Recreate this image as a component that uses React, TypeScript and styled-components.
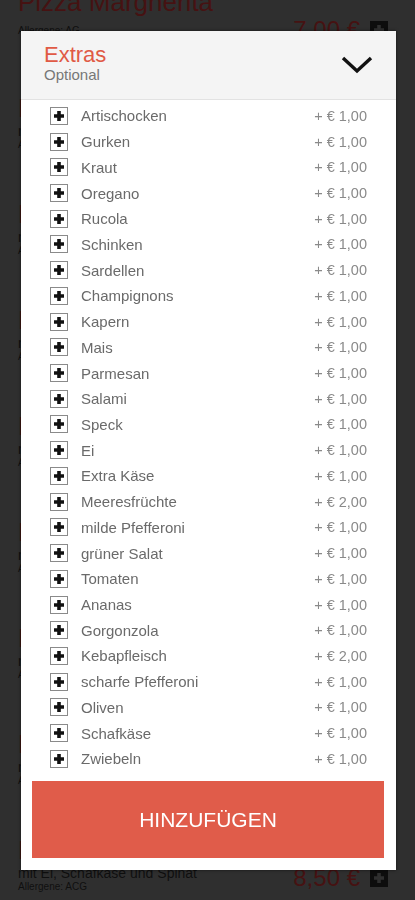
import styled, { createGlobalStyle } from 'styled-components';

interface Extra {
    name: string;
    price: string;
}

interface Dish {
    title: string;
    description?: string;
    allergens: string;
    price: string;
}

const extras: Extra[] = [
    { name: 'Artischocken', price: '1,00' },
    { name: 'Gurken', price: '1,00' },
    { name: 'Kraut', price: '1,00' },
    { name: 'Oregano', price: '1,00' },
    { name: 'Rucola', price: '1,00' },
    { name: 'Schinken', price: '1,00' },
    { name: 'Sardellen', price: '1,00' },
    { name: 'Champignons', price: '1,00' },
    { name: 'Kapern', price: '1,00' },
    { name: 'Mais', price: '1,00' },
    { name: 'Parmesan', price: '1,00' },
    { name: 'Salami', price: '1,00' },
    { name: 'Speck', price: '1,00' },
    { name: 'Ei', price: '1,00' },
    { name: 'Extra Käse', price: '1,00' },
    { name: 'Meeresfrüchte', price: '2,00' },
    { name: 'milde Pfefferoni', price: '1,00' },
    { name: 'grüner Salat', price: '1,00' },
    { name: 'Tomaten', price: '1,00' },
    { name: 'Ananas', price: '1,00' },
    { name: 'Gorgonzola', price: '1,00' },
    { name: 'Kebapfleisch', price: '2,00' },
    { name: 'scharfe Pfefferoni', price: '1,00' },
    { name: 'Oliven', price: '1,00' },
    { name: 'Schafkäse', price: '1,00' },
    { name: 'Zwiebeln', price: '1,00' },
];

const dishes: Dish[] = [
    { title: 'Pizza Margherita', allergens: 'AG', price: '7,00' },
    { title: 'Pizza Salami', description: 'mit Salami', allergens: 'AG', price: '7,50' },
    { title: 'Pizza Prosciutto', description: 'mit Schinken', allergens: 'AG', price: '7,50' },
    { title: 'Pizza Funghi', description: 'mit Champignons', allergens: 'AG', price: '7,50' },
    { title: 'Pizza Tonno', description: 'mit Thunfisch und Zwiebeln', allergens: 'ADG', price: '8,00' },
    { title: 'Pizza Hawaii', description: 'mit Schinken und Ananas', allergens: 'AG', price: '8,00' },
    { title: 'Pizza Vegetaria', description: 'mit Gemüse', allergens: 'AG', price: '8,00' },
    { title: 'Pizza Diavolo', description: 'mit scharfer Salami', allergens: 'AG', price: '8,00' },
    { title: 'Pizza Spinaci', description: 'mit Ei, Schafkäse und Spinat', allergens: 'ACG', price: '8,50' },
];

const GlobalStyle = createGlobalStyle`
    html, body {
        margin: 0;
        padding: 0;
        background: #2f2f2f;
        font-family: 'Liberation Sans', Arial, sans-serif;
        overflow: hidden;
    }
`;

const PlusIcon = ({ dark }: { dark?: boolean }) => (
    <svg width="18" height="18" viewBox="0 0 18 18">
        {dark ? (
            <rect x="0" y="0" width="18" height="18" fill="#0d0d0d" />
        ) : (
            <rect x="0.5" y="0.5" width="17" height="17" fill="#fff" stroke="#8a8a8a" />
        )}
        <path
            d="M9 4 V14 M4 9 H14"
            stroke={dark ? '#2f2f2f' : '#111'}
            strokeWidth="3.6"
        />
    </svg>
);

const Chevron = () => (
    <svg width="32" height="18" viewBox="0 0 32 18">
        <path d="M2 2 L16 15 L30 2" fill="none" stroke="#111" strokeWidth="3.4" />
    </svg>
);

const App = () => {
    return (
        <>
            <GlobalStyle />
            <Menu>
                {dishes.map((dish, i) => (
                    <DishItem key={`dish_${i}`}>
                        <DishTitle>{dish.title}</DishTitle>
                        <DishRow>
                            <DishInfo>
                                {dish.description && (
                                    <DishDescription>{dish.description}</DishDescription>
                                )}
                                <Allergens>Allergene: {dish.allergens}</Allergens>
                            </DishInfo>
                            <DishPrice>{dish.price} €</DishPrice>
                            <PlusIcon dark />
                        </DishRow>
                    </DishItem>
                ))}
            </Menu>
            <Modal>
                <Header>
                    <HeaderText>
                        <HeaderTitle>Extras</HeaderTitle>
                        <HeaderSub>Optional</HeaderSub>
                    </HeaderText>
                    <Chevron />
                </Header>
                <ExtraList>
                    {extras.map((extra, i) => (
                        <ExtraRow key={`extra_${i}`}>
                            <PlusIcon />
                            <ExtraName>{extra.name}</ExtraName>
                            <ExtraPrice>+ € {extra.price}</ExtraPrice>
                        </ExtraRow>
                    ))}
                </ExtraList>
                <AddButton>HINZUFÜGEN</AddButton>
            </Modal>
        </>
    );
};

const Menu = styled.div`
    display: flex;
    flex-direction: column;
    margin-top: -12px;
    padding: 0 27px 0 18px;
`;

const DishItem = styled.div`
    display: flex;
    flex-direction: column;
    height: 106px;
`;

const DishTitle = styled.div`
    font-size: 26px;
    line-height: 28px;
    color: #461212;
`;

const DishRow = styled.div`
    display: flex;
    flex-direction: row;
    align-items: center;
    gap: 10px;
`;

const DishInfo = styled.div`
    display: flex;
    flex-direction: column;
    flex: 1;
`;

const DishDescription = styled.div`
    font-size: 14px;
    color: #0f0f0f;
`;

const Allergens = styled.div`
    font-size: 10px;
    color: #0f0f0f;
`;

const DishPrice = styled.div`
    font-size: 24px;
    color: #461212;
`;

const Modal = styled.div`
    position: fixed;
    top: 31px;
    left: 21px;
    width: 375px;
    bottom: 30px;
    background: #fff;
    display: flex;
    flex-direction: column;
    box-shadow: 0 0 3px rgba(0, 0, 0, 0.6);
`;

const Header = styled.div`
    display: flex;
    flex-direction: row;
    justify-content: space-between;
    align-items: center;
    height: 69px;
    padding: 0 23px;
    background: #f4f4f4;
    border-bottom: 1px solid #e2e2e2;
    box-sizing: border-box;
`;

const HeaderText = styled.div`
    display: flex;
    flex-direction: column;
    margin-top: -4px;
`;

const HeaderTitle = styled.div`
    font-size: 22px;
    line-height: 24px;
    color: #e05a45;
`;

const HeaderSub = styled.div`
    font-size: 15px;
    line-height: 16px;
    color: #777;
`;

const ExtraList = styled.div`
    display: flex;
    flex-direction: column;
    padding: 3px 29px 0 29px;
    flex: 1;
`;

const ExtraRow = styled.div`
    display: flex;
    flex-direction: row;
    align-items: center;
    height: 25.72px;
`;

const ExtraName = styled.div`
    flex: 1;
    margin-left: 13px;
    font-size: 15px;
    color: #6a6a6a;
`;

const ExtraPrice = styled.div`
    font-size: 14.5px;
    color: #8a8a8a;
`;

const AddButton = styled.button`
    margin: 0 12px 12px 11px;
    height: 77px;
    border: none;
    background: #e05c4a;
    color: #fff;
    font-family: 'Liberation Sans', Arial, sans-serif;
    font-size: 21px;
`;

export default App;
